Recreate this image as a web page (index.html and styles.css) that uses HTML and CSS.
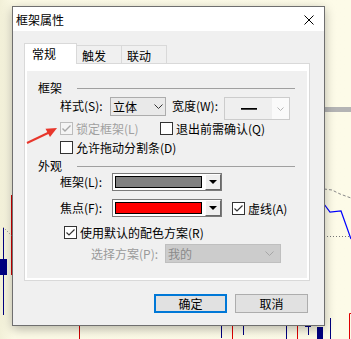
FILE: index.html
```html
<!DOCTYPE html>
<html lang="zh-CN">
<head>
    <meta charset="UTF-8">
    <title>框架属性</title>
    <link rel="stylesheet" href="styles.css">
</head>
<body>

<!-- chart behind the dialog -->
<svg class="chart" width="351" height="339" viewBox="0 0 351 339">
    <rect x="324" y="107" width="27" height="5" fill="#b4b4b4"/>
    <polyline points="324,189 332,190 340,194 351,198" fill="none" stroke="#888" stroke-dasharray="3 2"/>
    <polyline points="324,204 330,212 341,211 351,239" fill="none" stroke="#0000ff" stroke-width="1.2"/>
    <line x1="324" y1="236.5" x2="351" y2="236.5" stroke="#777" stroke-dasharray="1 2"/>
    <line x1="11.5" y1="195" x2="11.5" y2="275" stroke="#d00000"/>
    <line x1="3.5" y1="228" x2="3.5" y2="315" stroke="#000080"/>
    <rect x="0" y="259" width="7" height="16" fill="#000080"/>
    <line x1="3" y1="227" x2="12" y2="236" stroke="#888" stroke-dasharray="1 2"/>
    <line x1="79.5" y1="326" x2="79.5" y2="339" stroke="#d00000"/>
    <line x1="221.5" y1="325" x2="221.5" y2="338" stroke="#000080"/>
    <line x1="232.5" y1="325" x2="232.5" y2="339" stroke="#e00000"/>
    <line x1="243.5" y1="325" x2="243.5" y2="335" stroke="#000080"/>
    <line x1="286.5" y1="325" x2="286.5" y2="339" stroke="#000080"/>
    <line x1="297.5" y1="325" x2="297.5" y2="339" stroke="#e00000"/>
    <line x1="305" y1="326.5" x2="311" y2="326.5" stroke="#000080"/>
    <line x1="308.5" y1="326" x2="308.5" y2="335" stroke="#000080"/>
    <rect x="317" y="327" width="6" height="12" fill="#000080"/>
    <line x1="330.5" y1="318" x2="330.5" y2="339" stroke="#000080"/>
    <polyline points="349.5,339 349.5,313.5 351,313.5" fill="none" stroke="#e00000"/>
</svg>

<div class="dialog">
    <div class="title-bar">
        <span class="title">框架属性</span>
        <svg class="close" width="10" height="10" viewBox="0 0 10 10">
            <path d="M0.5 0.5 L9.5 9.5 M9.5 0.5 L0.5 9.5" stroke="#000" stroke-width="1"/>
        </svg>
    </div>

    <div class="dialog-body">
        <div class="tabs">
            <div class="tab active">常规</div>
            <div class="tab">触发</div>
            <div class="tab">联动</div>
        </div>

        <div class="tab-panel">
            <div class="page">
                <div class="group-head"><span>框架</span><i class="rule"></i></div>

                <div class="row row-style">
                    <span class="label">样式(S):</span>
                    <div class="style-select">
                        <span>立体</span>
                        <svg width="9" height="5" viewBox="0 0 9 5"><polyline points="0.5,0.5 4.5,4.5 8.5,0.5" fill="none" stroke="#333"/></svg>
                    </div>
                    <span class="label width-label">宽度(W):</span>
                    <div class="width-select">
                        <span class="line-sample"><i></i></span>
                        <span class="width-drop">
                            <svg width="7" height="4" viewBox="0 0 7 4"><polyline points="0.5,0.5 3.5,3.5 6.5,0.5" fill="none" stroke="#b5b5b5"/></svg>
                        </span>
                    </div>
                </div>

                <div class="row row-check">
                    <span class="check disabled lock">
                        <span class="box"><svg width="11" height="11" viewBox="0 0 11 11"><polyline points="1.5,5.5 4,8 9.5,2.5" fill="none" stroke="#a8a8a8" stroke-width="1.4"/></svg></span>
                        锁定框架(L)
                    </span>
                    <span class="check"><span class="box"></span>退出前需确认(Q)</span>
                </div>

                <div class="row row-check gap6">
                    <span class="check"><span class="box"></span>允许拖动分割条(D)</span>
                </div>

                <div class="group-head second"><span>外观</span><i class="rule"></i></div>

                <div class="row row-color">
                    <span class="label">框架(L):</span>
                    <div class="color-combo">
                        <span class="swatch grey"></span>
                        <span class="drop"><i></i></span>
                    </div>
                </div>

                <div class="row row-color gap8">
                    <span class="label">焦点(F):</span>
                    <div class="color-combo">
                        <span class="swatch red"></span>
                        <span class="drop"><i></i></span>
                    </div>
                    <span class="check dash">
                        <span class="box"><svg width="11" height="11" viewBox="0 0 11 11"><polyline points="1.5,5.5 4,8 9.5,2.5" fill="none" stroke="#333" stroke-width="1.2"/></svg></span>
                        虚线(A)
                    </span>
                </div>

                <div class="row row-check scheme-check">
                    <span class="check">
                        <span class="box"><svg width="11" height="11" viewBox="0 0 11 11"><polyline points="1.5,5.5 4,8 9.5,2.5" fill="none" stroke="#333" stroke-width="1.2"/></svg></span>
                        使用默认的配色方案(R)
                    </span>
                </div>

                <div class="row row-scheme">
                    <span class="label muted scheme-label">选择方案(P):</span>
                    <div class="scheme-select">
                        <span>我的</span>
                        <svg width="9" height="5" viewBox="0 0 9 5"><polyline points="0.5,0.5 4.5,4.5 8.5,0.5" fill="none" stroke="#a6a6a6"/></svg>
                    </div>
                </div>
            </div>
        </div>

        <div class="buttons">
            <div class="btn default">确定</div>
            <div class="btn">取消</div>
        </div>
    </div>
</div>

<!-- red pointer drawn over the dialog -->
<svg class="arrow" width="351" height="339" viewBox="0 0 351 339">
    <line x1="27" y1="143" x2="49" y2="132.5" stroke="#e8372c" stroke-width="2"/>
    <polygon points="57,128 45.5,128.8 50,137" fill="#e8372c"/>
</svg>

</body>
</html>
```

FILE: styles.css
```css
body {
    margin: 0;
    width: 351px;
    height: 339px;
    overflow: hidden;
    position: relative;
    background: linear-gradient(to right, #f2f0d8 0, #fcfae6 14px, #fdfbe8 100%);
    font-family: "Noto Sans CJK SC", sans-serif;
    font-size: 12px;
    color: #000;
}
.chart {
    position: absolute;
    left: 0;
    top: 0;
}
.arrow {
    position: absolute;
    left: 0;
    top: 0;
    pointer-events: none;
}
.dialog {
    position: absolute;
    left: 12px;
    top: 6px;
    width: 313px;
    height: 320px;
    box-sizing: border-box;
    border: 1px solid #6f6f6f;
    background: #f0f0f0;
    box-shadow: 0 3px 10px rgba(0, 0, 0, 0.28);
    display: flex;
    flex-direction: column;
}
.title-bar {
    height: 24px;
    background: #fff;
    display: flex;
    align-items: center;
    justify-content: space-between;
    padding: 0 10px 0 3px;
}
.title {
    line-height: 14px;
    margin-top: 1px;
}
.close {
    display: block;
    margin-top: 1px;
}
.dialog-body {
    flex: 1;
    padding: 12px 0 0 11px;
}

/* tabs */
.tabs {
    display: flex;
    align-items: flex-end;
    height: 20px;
}
.tab {
    box-sizing: border-box;
    width: 46px;
    height: 18px;
    margin-left: -1px;
    padding: 3px 0 0 5px;
    line-height: 14px;
    border: 1px solid #d9d9d9;
    border-bottom: none;
    background: #f0f0f0;
}
.tab.active {
    width: 53px;
    height: 21px;
    margin-left: 0;
    margin-bottom: -1px;
    padding: 3px 0 0 7px;
    background: #fff;
    position: relative;
    z-index: 1;
}
.tab-panel {
    box-sizing: border-box;
    width: 286px;
    height: 218px;
    border: 1px solid #d9d9d9;
    background: #fff;
    padding: 7px 2px 2px 2px;
    display: flex;
}
.page {
    flex: 1;
    background: #f0f0f0;
    padding-top: 11px;
}

/* groups and rows */
.group-head {
    display: flex;
    align-items: center;
    height: 12px;
    line-height: 12px;
    padding-left: 11px;
    margin-right: 12px;
}
.group-head.second {
    margin-top: 6px;
}
.rule {
    flex: 1;
    margin-left: 15px;
    border-top: 1px solid #a0a0a0;
}
.row {
    display: flex;
    padding-left: 33px;
}
.label {
    width: 48px;
    flex: none;
    line-height: 12px;
    white-space: nowrap;
}
.muted {
    color: #9a9a9a;
}
.scheme-label {
    width: 72px;
}
.row-style {
    align-items: flex-start;
    margin-top: 3px;
    height: 23px;
}
.row-style .label {
    margin-top: 3px;
}
.style-select {
    box-sizing: border-box;
    width: 56px;
    height: 19px;
    margin-left: 2px;
    padding: 0 2px 0 2px;
    border: 1px solid #acacac;
    background: #e9e9e9;
    display: flex;
    align-items: center;
    justify-content: space-between;
    line-height: 12px;
}
.width-label {
    margin-left: 6px;
}
.width-select {
    box-sizing: border-box;
    width: 66px;
    height: 23px;
    margin-left: 4px;
    border: 1px solid #cccccc;
    display: flex;
}
.line-sample {
    width: 47px;
    background: #efefef;
    display: flex;
    align-items: center;
    justify-content: center;
}
.line-sample i {
    width: 16px;
    height: 1px;
    background: #000;
    border-bottom: 1px solid #444;
}
.width-drop {
    flex: 1;
    background: #fafafa;
    display: flex;
    align-items: center;
    justify-content: center;
}

/* checkboxes */
.row-check {
    align-items: center;
    height: 13px;
    margin-top: 2px;
}
.gap6 {
    margin-top: 6px;
}
.check {
    display: flex;
    align-items: center;
    line-height: 13px;
    white-space: nowrap;
}
.box {
    box-sizing: border-box;
    width: 13px;
    height: 13px;
    margin-right: 3px;
    border: 1px solid #333;
    background: #fff;
    display: flex;
    align-items: center;
    justify-content: center;
}
.lock {
    width: 100px;
}
.check.disabled {
    color: #a0a0a0;
}
.check.disabled .box {
    border-color: #bcbcbc;
    background: #f4f4f4;
}

/* colour combos */
.row-color {
    align-items: center;
    height: 18px;
    margin-top: 1px;
}
.row-color.gap8 {
    margin-top: 8px;
}
.color-combo {
    box-sizing: border-box;
    width: 110px;
    height: 18px;
    margin-left: 4px;
    border: 1px solid #7a7a7a;
    background: #fff;
    display: flex;
}
.swatch {
    box-sizing: border-box;
    width: 87px;
    margin: 2px 3px 2px 2px;
    border: 1px solid #000;
}
.swatch.grey {
    background: #808080;
}
.swatch.red {
    background: #ff0000;
}
.drop {
    box-sizing: border-box;
    width: 16px;
    border: 1px solid;
    border-color: #fff #696969 #696969 #fff;
    background: #f0f0f0;
    display: flex;
    align-items: center;
    justify-content: center;
}
.drop i {
    width: 0;
    height: 0;
    border-left: 4px solid transparent;
    border-right: 4px solid transparent;
    border-top: 4px solid #000;
}
.dash {
    margin-left: 10px;
}
.scheme-check {
    padding-left: 37px;
    margin-top: 9px;
}
.row-scheme {
    align-items: center;
    padding-left: 64px;
    margin-top: 5px;
    height: 19px;
}
.scheme-select {
    box-sizing: border-box;
    width: 116px;
    height: 19px;
    margin-left: 2px;
    padding: 0 6px 0 2px;
    border: 1px solid #bfbfbf;
    background: #cccccc;
    color: #8a8a8a;
    display: flex;
    align-items: center;
    justify-content: space-between;
    line-height: 12px;
}

/* buttons */
.buttons {
    display: flex;
    justify-content: flex-end;
    gap: 8px;
    margin-top: 13px;
    padding-right: 16px;
}
.btn {
    box-sizing: border-box;
    width: 73px;
    height: 19px;
    border: 1px solid #adadad;
    background: #e1e1e1;
    display: flex;
    align-items: center;
    justify-content: center;
    line-height: 14px;
}
.btn.default {
    border: 2px solid #0078d7;
}
```
